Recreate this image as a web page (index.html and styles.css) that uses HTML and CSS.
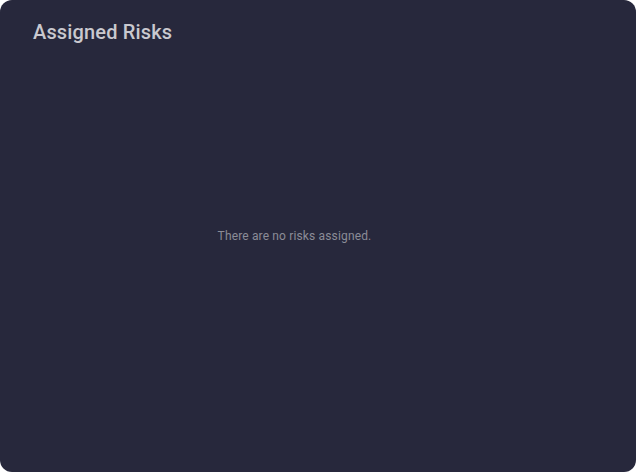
FILE: index.html
```html
<!DOCTYPE html>
<html>
<head>
<meta charset="utf-8">
<link rel="stylesheet" href="styles.css">
</head>
<body>
<section class="card">
  <h2 class="card-title">Assigned Risks</h2>
  <div class="empty">
    <p class="empty-text">There are no risks assigned.</p>
  </div>
</section>
</body>
</html>
```
FILE: styles.css
```css
html, body {
  margin: 0;
  padding: 0;
  background: #ffffff;
}
body {
  width: 636px;
  height: 472px;
  font-family: Roboto, "Liberation Sans", sans-serif;
}
.card {
  box-sizing: border-box;
  width: 636px;
  height: 472px;
  background: #27283c;
  border-radius: 12px;
  padding: 20px 33px;
  display: flex;
  flex-direction: column;
}
.card-title {
  margin: 0;
  font-size: 20px;
  line-height: 24px;
  font-weight: 500;
  letter-spacing: 0.15px;
  color: #c9c9cf;
}
.empty {
  flex: 1;
  display: flex;
  align-items: center;
  justify-content: center;
  padding-right: 47px;
  padding-bottom: 24px;
}
.empty-text {
  margin: 0;
  font-size: 12px;
  line-height: 16px;
  letter-spacing: 0.15px;
  color: #8b8c97;
}
```
